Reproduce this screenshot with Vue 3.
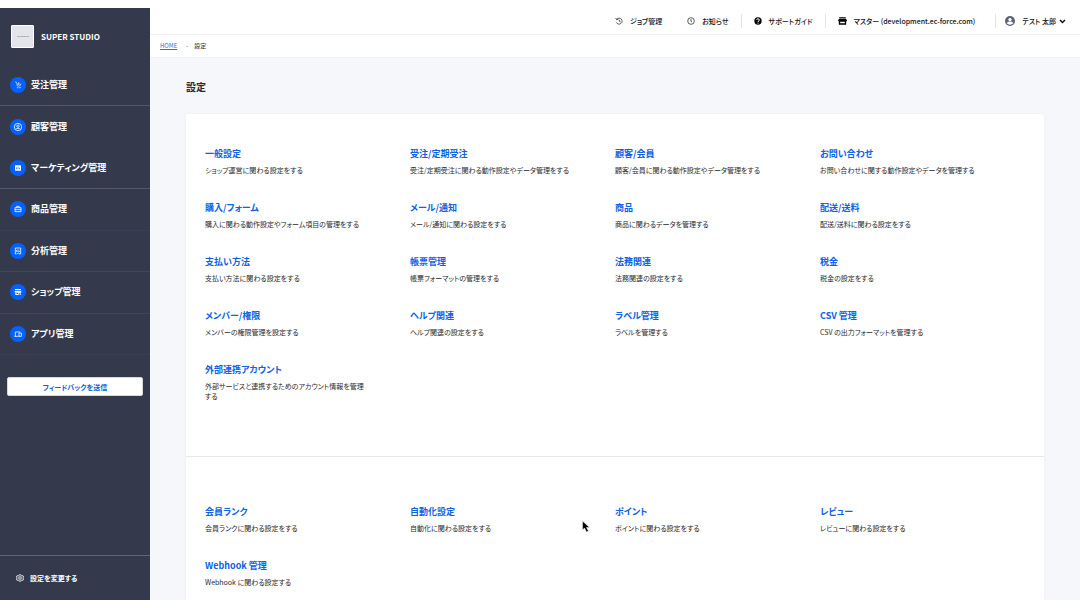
<script setup>
const menu = [
  { label: '受注管理', icon: 'cart', line: 'strong' },
  { label: '顧客管理', icon: 'user', line: 'none' },
  { label: 'マーケティング管理', icon: 'chart', line: 'strong' },
  { label: '商品管理', icon: 'bag', line: 'faint' },
  { label: '分析管理', icon: 'report', line: 'soft' },
  { label: 'ショップ管理', icon: 'shop', line: 'soft' },
  { label: 'アプリ管理', icon: 'device', line: 'faint' },
]

const sections = [
  [
    { title: '一般設定', text: 'ショップ運営に関わる設定をする' },
    { title: '受注/定期受注', text: '受注/定期受注に関わる動作設定やデータ管理をする' },
    { title: '顧客/会員', text: '顧客/会員に関わる動作設定やデータ管理をする' },
    { title: 'お問い合わせ', text: 'お問い合わせに関する動作設定やデータを管理する' },
    { title: '購入/フォーム', text: '購入に関わる動作設定やフォーム項目の管理をする' },
    { title: 'メール/通知', text: 'メール/通知に関わる設定をする' },
    { title: '商品', text: '商品に関わるデータを管理する' },
    { title: '配送/送料', text: '配送/送料に関わる設定をする' },
    { title: '支払い方法', text: '支払い方法に関わる設定をする' },
    { title: '帳票管理', text: '帳票フォーマットの管理をする' },
    { title: '法務関連', text: '法務関連の設定をする' },
    { title: '税金', text: '税金の設定をする' },
    { title: 'メンバー/権限', text: 'メンバーの権限管理を設定する' },
    { title: 'ヘルプ関連', text: 'ヘルプ関連の設定をする' },
    { title: 'ラベル管理', text: 'ラベルを管理する' },
    { title: 'CSV 管理', text: 'CSV の出力フォーマットを管理する' },
    { title: '外部連携アカウント', text: '外部サービスと連携するためのアカウント情報を管理する' },
  ],
  [
    { title: '会員ランク', text: '会員ランクに関わる設定をする' },
    { title: '自動化設定', text: '自動化に関わる設定をする' },
    { title: 'ポイント', text: 'ポイントに関わる設定をする' },
    { title: 'レビュー', text: 'レビューに関わる設定をする' },
    { title: 'Webhook 管理', text: 'Webhook に関わる設定する' },
  ],
]
</script>

<template>
  <div class="app">
    <aside class="sidebar">
      <div class="brand">
        <span class="logo"><i></i><i></i><i></i></span>
        <span class="brand-name">SUPER STUDIO</span>
      </div>
      <nav class="menu">
        <a v-for="m in menu" :key="m.label" href="#" class="menu-item" :class="m.line">
          <span class="bubble">
            <svg viewBox="0 0 24 24" class="menu-icon">
              <g v-if="m.icon === 'cart'" class="stroke thin">
                <path d="M3 3h4l3 12h8l3-7M9 9h10M14 3v9" />
                <circle cx="11" cy="20" r="1.5" /><circle cx="18" cy="20" r="1.5" />
              </g>
              <g v-else-if="m.icon === 'user'" class="stroke">
                <circle cx="12" cy="12" r="11" /><circle cx="12" cy="9.500" r="3.500" />
                <path d="M5 19c2-4 12-4 14 0" />
              </g>
              <path v-else-if="m.icon === 'chart'" class="solid" fill-rule="evenodd" d="M3 4h18v16H3zM7 10v6h2v-6zM11 8v8h2V8zM15 11v5h2v-5z" />
              <g v-else-if="m.icon === 'bag'" class="stroke">
                <path d="M3 8h18v12H3zM8 8V4h8v4M3 14h18" />
              </g>
              <g v-else-if="m.icon === 'report'" class="stroke">
                <path d="M4 3h16v18h-4M4 3v18h4M8 15V9M12 15V7M16 15v-4M10 21l3-4 4 4" />
              </g>
              <path v-else-if="m.icon === 'shop'" class="solid" fill-rule="evenodd" d="M3 3h18v3H3zM2 8h20v5h-2v8h-3v-7h-3v7H4v-8H2zM7 14v4h5v-4z" />
              <g v-else class="stroke">
                <path d="M1 19h13M4 19V6h15M15 9h7v10h-7z" />
              </g>
            </svg>
          </span>
          {{ m.label }}
        </a>
      </nav>
      <button type="button" class="feedback">フィードバックを送信</button>
      <a href="#" class="change">
        <svg viewBox="0 0 24 24" class="gear">
          <path d="M10 2h4l1 3 3 1 3-1 2 4-3 3 3 3-2 4-3-1-3 1-1 3h-4l-1-3-3-1-3 1-2-4 3-3-3-3 2-4 3 1 3-1z" />
          <circle cx="12" cy="12" r="4" />
        </svg>
        設定を変更する
      </a>
    </aside>

    <div class="page">
      <header class="topbar">
        <a href="#" class="top-item plain">
          <svg viewBox="0 0 24 24" class="top-icon">
            <path class="line" d="M5 7a9 9 0 1 1-1 9M2 3l3 5 5-1M13 8v5l4 2" />
          </svg>
          ジョブ管理
        </a>
        <a href="#" class="top-item">
          <svg viewBox="0 0 24 24" class="top-icon">
            <circle class="line" cx="12" cy="12" r="10" /><path class="line" d="M12 6v7l3 2" />
          </svg>
          お知らせ
        </a>
        <a href="#" class="top-item">
          <svg viewBox="0 0 24 24" class="top-icon">
            <circle cx="12" cy="12" r="11" />
            <path class="mark" d="M8 9c0-5 8-5 8 0 0 3-4 3-4 6M12 17v3" />
          </svg>
          サポートガイド
        </a>
        <a href="#" class="top-item master">
          <svg viewBox="0 0 26 24" class="top-icon wide">
            <path fill-rule="evenodd" d="M3 1h20v3H3zM3 5h20l3 4v4h-2v10H2V13H0V9zM6 14v5h14v-5z" />
          </svg>
          マスター (development.ec-force.com)
        </a>
        <button type="button" class="top-item account">
          <svg viewBox="0 0 24 24" class="avatar">
            <circle cx="12" cy="12" r="12" />
            <circle class="face" cx="12" cy="8.500" r="4" />
            <path class="face" d="M4 17c3-5 13-5 16 0-4 5-12 5-16 0z" />
          </svg>
          テスト 太郎
          <svg viewBox="0 0 14 10" class="chevron"><path d="M2 2l5 5 5-5" /></svg>
        </button>
      </header>
      <nav class="crumbs">
        <a href="#">HOME</a>
        <span class="dot"></span>
        <span>設定</span>
      </nav>
      <main class="content">
        <h1>設定</h1>
        <div class="card">
          <section v-for="(items, i) in sections" :key="i" class="group">
            <article v-for="item in items" :key="item.title" class="item">
              <h2><a href="#">{{ item.title }}</a></h2>
              <p>{{ item.text }}</p>
            </article>
          </section>
        </div>
      </main>
    </div>

    <svg viewBox="0 0 16 24" class="cursor">
      <path d="M1 1v18l4-4 4 8 4-2-4-7h6z" />
    </svg>
  </div>
</template>

<style>
body {
  background: #fff;
}
</style>

<style scoped>
.app {
  display: flex;
  height: calc(100vh - 16px);
  margin: 8px 0;
  overflow: hidden;
  color: #2a2a2a;
  font-family: "Noto Sans CJK JP", sans-serif;
  font-feature-settings: "palt";
  font-size: 7px;
  line-height: 10px;
}
a {
  color: inherit;
  text-decoration: none;
}
button {
  border: 0;
  font: inherit;
  font-feature-settings: inherit;
  cursor: pointer;
}
.sidebar {
  display: flex;
  flex-direction: column;
  flex: 0 0 150px;
  background: #343a4c;
  color: #fff;
  font-weight: 700;
}
.brand {
  display: flex;
  align-items: center;
  gap: 7px;
  padding: 17px 11px;
  font-size: 8px;
}
.logo {
  display: flex;
  align-items: center;
  justify-content: center;
  box-sizing: border-box;
  width: 23px;
  height: 23px;
  border: 1px solid #fff;
  border-radius: 1px;
  background: #e4e5ea;
}
.logo i {
  width: 4px;
  height: 1px;
  background: #b3b5bb;
}
.menu {
  display: grid;
  grid-auto-rows: 1fr;
  height: 290px;
}
.menu-item {
  display: flex;
  align-items: center;
  gap: 5px;
  padding-left: 10px;
  border-bottom: 1px solid transparent;
  font-size: 9px;
}
.strong { border-color: #52586a; }
.soft { border-color: #3f4658; }
.faint { border-color: #394053; }
.bubble {
  display: flex;
  align-items: center;
  justify-content: center;
  width: 16px;
  height: 16px;
  border-radius: 50%;
  background: #0461fb;
}
.menu-icon {
  width: 8px;
  height: 8px;
}
.stroke {
  fill: none;
  stroke: #fff;
  stroke-width: 2.4;
}
.thin { stroke-width: 1.6; }
.solid { fill: #fff; }
.feedback {
  height: 19px;
  margin: 22px 7px 0;
  padding: 0;
  border: 1px solid #d5d8de;
  border-radius: 2px;
  background: #fff;
  color: #0b5fe0;
  font-size: 7px;
  font-weight: 700;
}
.change {
  display: flex;
  align-items: center;
  gap: 6px;
  height: 44px;
  margin-top: auto;
  padding-left: 16px;
  border-top: 1px solid #5f6577;
  font-size: 7px;
}
.gear {
  width: 8px;
  height: 8px;
  fill: none;
  stroke: #fff;
  stroke-width: 2.4;
}
.page {
  flex: 1;
  min-width: 0;
  background: #f6f7fa;
}
.topbar {
  display: flex;
  align-items: center;
  justify-content: flex-end;
  height: 26px;
  padding-right: 14px;
  border-bottom: 1px solid #f0f1f2;
  background: #fff;
  color: #111;
  font-weight: 500;
}
.top-item {
  display: flex;
  align-items: center;
  gap: 7px;
  height: 14px;
  padding: 0 12px;
  border-right: 1px solid #e3e4e8;
  background: none;
  color: inherit;
  white-space: nowrap;
}
.plain { border-color: transparent; }
.master { padding: 0 20px 0 12px; }
.account {
  padding: 0 0 0 9px;
  border-right: 0;
}
.top-icon {
  width: 8px;
  height: 8px;
}
.wide { width: 9px; }
.line {
  fill: none;
  stroke: #111;
  stroke-width: 2;
}
.mark {
  fill: none;
  stroke: #fff;
  stroke-width: 3;
}
.avatar {
  width: 10px;
  height: 10px;
  fill: #5c6378;
}
.face { fill: #fff; }
.chevron {
  width: 7px;
  height: 5px;
  margin-left: -4px;
  fill: none;
  stroke: #111;
  stroke-width: 3;
}
.crumbs {
  display: flex;
  align-items: center;
  height: 22px;
  padding-left: 10px;
  border-bottom: 1px solid #f1f2f4;
  background: #fff;
  font-size: 6px;
}
.crumbs a {
  color: #2a73e0;
  text-decoration: underline;
}
.dot {
  width: 2px;
  height: 1px;
  margin: 0 6px 0 9px;
  background: #ccc;
}
.content {
  padding: 21px 36px 0;
}
h1 {
  margin: 0;
  font-size: 10px;
  line-height: 16px;
}
.card {
  margin-top: 19px;
  border-radius: 2px;
  background: #fff;
  box-shadow: 0 0 3px #e9ecef;
}
.group {
  display: grid;
  grid-template-columns: repeat(4, 1fr);
  row-gap: 22px;
  padding: 34px 19px 55px;
}
.group + .group {
  padding-top: 49px;
  border-top: 1px solid #e8e9eb;
}
.item {
  min-height: 32px;
  padding-right: 43px;
}
h2 {
  margin: 0 0 5px;
  color: #0d62e8;
  font-size: 9px;
  line-height: 12px;
}
p {
  margin: 0;
}
.cursor {
  position: absolute;
  left: 582px;
  top: 520px;
  width: 8px;
  height: 13px;
  fill: #000;
  stroke: #fff;
  stroke-width: 1;
}
</style>
